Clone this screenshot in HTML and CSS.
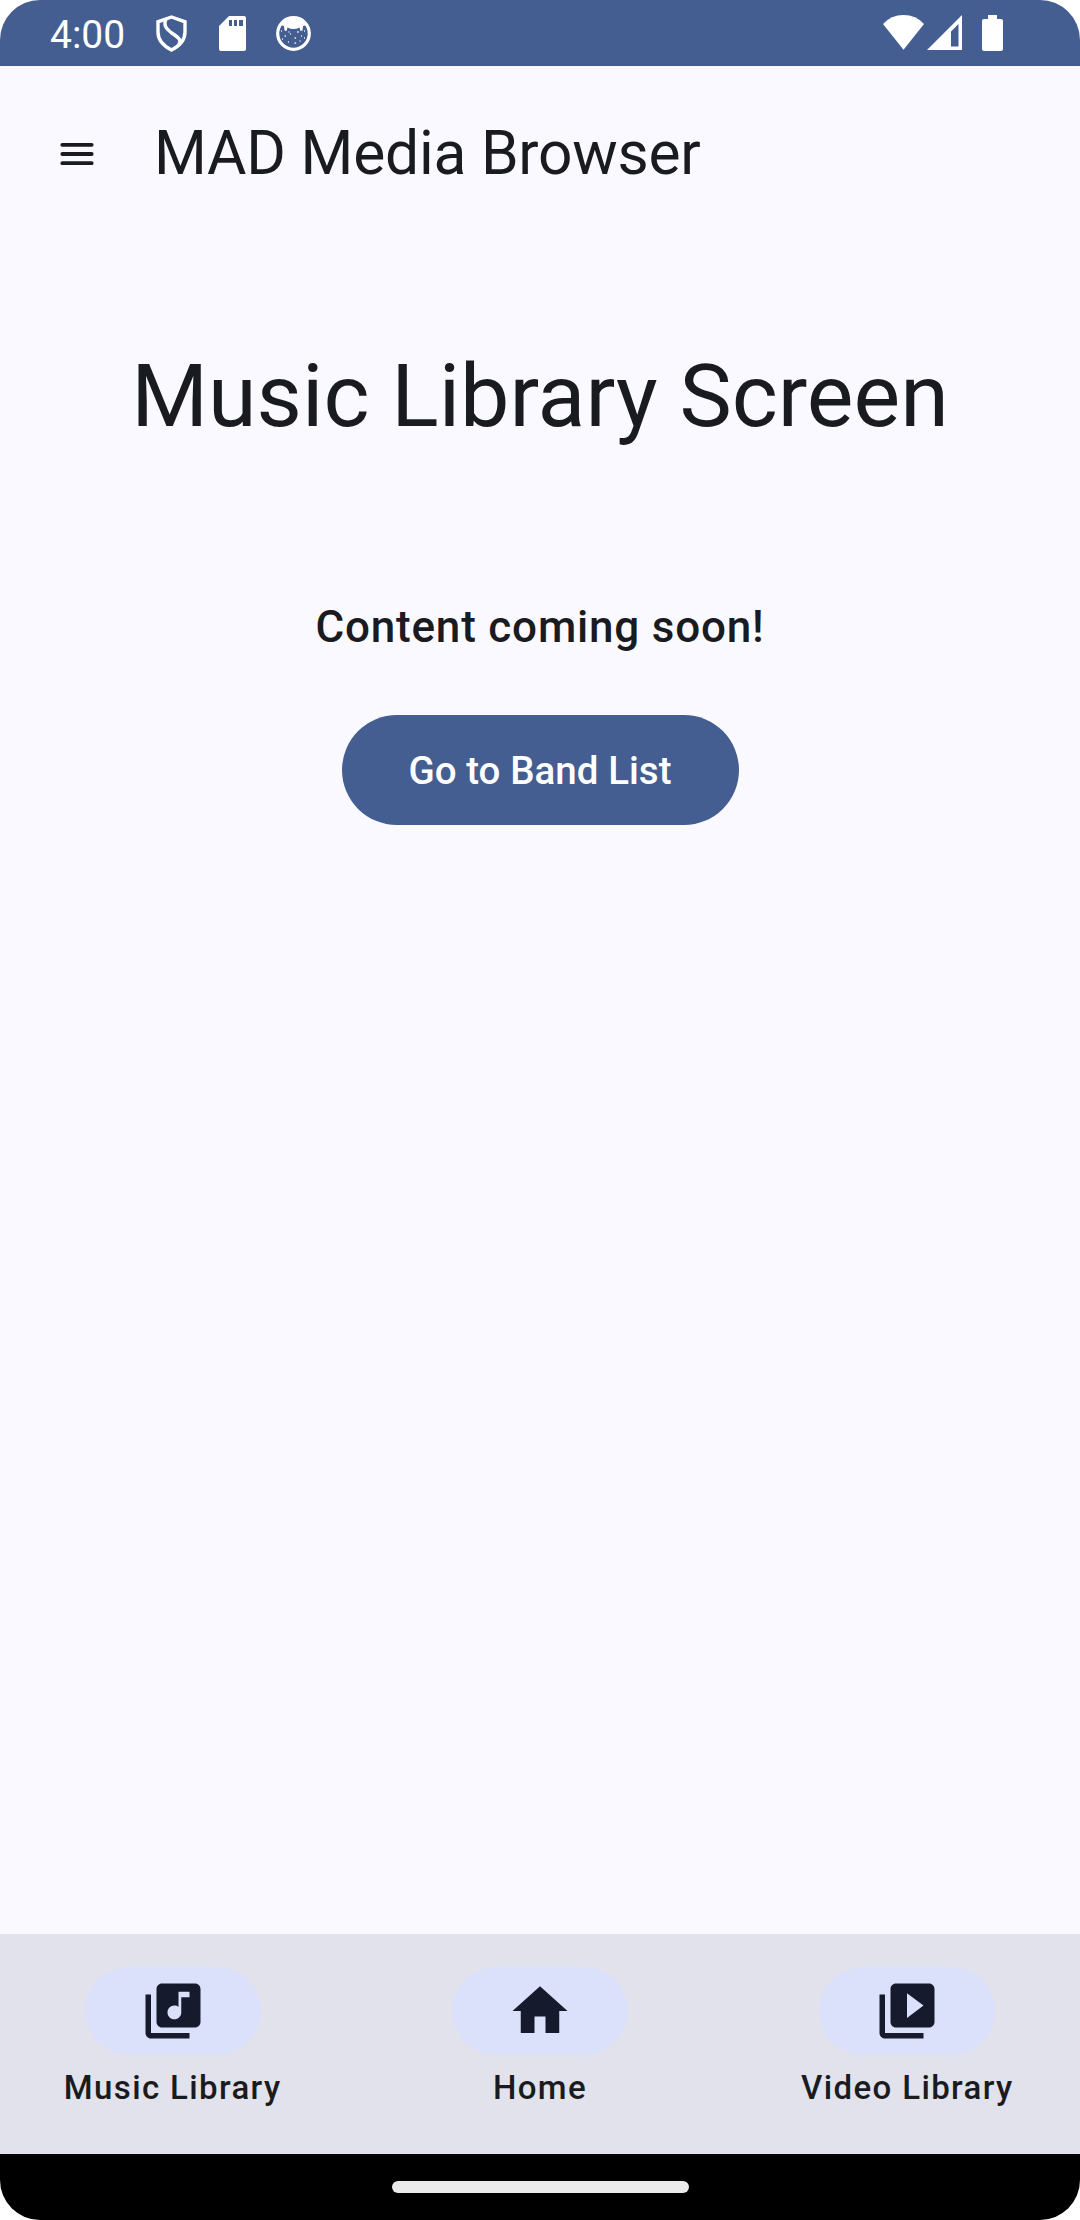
FILE: index.html
```html
<!DOCTYPE html>
<html lang="en">
<head>
<meta charset="utf-8">
<title>MAD Media Browser</title>
<link rel="stylesheet" href="styles.css">
</head>
<body>
<div class="screen">
  <header class="status-bar">
    <span class="clock">4:00</span>
    <svg class="status-left" width="156" height="40" viewBox="156 14 156 40" aria-hidden="true">
      <path d="M171.500 17 L185 21.800 V32 C185 41 179.500 46 171.500 50 C163.500 46 158 41 158 32 V21.800 Z" fill="none" stroke="#fff" stroke-width="3.400"/>
      <path d="M166 18.500 C163.500 25 165.500 28.500 171 32.500 C179.500 38 182 40 178 46" fill="none" stroke="#fff" stroke-width="3.400"/>
      <path fill="#fff" fill-rule="evenodd" d="M229 16 H244 Q246 16 246 18 V49 Q246 51 244 51 H221 Q219 51 219 49 V26 Z M229 20 V26 H232 V20 Z M234 20 V26 H237 V20 Z M239 20 V26 H243 V20 Z"/>
      <circle cx="293.500" cy="33.500" r="15.800" fill="none" stroke="#fff" stroke-width="3.200"/>
      <path fill="#fff" d="M280 25 Q285 17 293.500 17 Q302 17 307 25 L303 26 L302.500 30.500 L300.500 31 L299.500 27.500 Q293.500 30.500 287.500 27.500 L286.500 31 L284.500 30.500 L284 26 Z"/>
      <path d="M281 31h1M288.500 32h1M297 32h1.800M304 31h1M284.500 36h1.500M290 34h1M294.500 38h1.600M301 36h1M282 39h1M288 42h1M294.500 43h1.600M299.500 41h1M304 38h1" stroke="#fff" stroke-width="1.300" opacity=".85"/>
    </svg>
    <svg class="status-right" width="122" height="40" viewBox="882 14 122 40" aria-hidden="true">
      <path fill="#fff" d="M883 24 Q891 15 903.500 15 Q916 15 924 24 L903.500 49.700 Z"/>
      <path fill="#fff" fill-rule="evenodd" d="M962 15 V50 H927 Z M958.500 24 L951 31.500 V46.500 H958.500 Z"/>
      <path fill="#fff" d="M988 15 H997 V19 H1001 Q1003 19 1003 21 V49 Q1003 51 1001 51 H984 Q982 51 982 49 V21 Q982 19 984 19 H988 Z"/>
    </svg>
  </header>
  <div class="app-bar">
    <svg class="menu" width="34" height="24" viewBox="0 0 34 24" aria-label="Menu"><path d="M2.300 2.800H31.700M2.300 12H31.700M2.300 21.200H31.700" stroke="#1a1b20" stroke-width="3.800" stroke-linecap="round"/></svg>
    <h1 class="title">MAD Media Browser</h1>
  </div>
  <main class="content">
    <h2 class="headline">Music Library Screen</h2>
    <p class="message">Content coming soon!</p>
    <button class="action">Go to Band List</button>
  </main>
  <nav class="nav">
    <div class="nav-item">
      <span class="pill"><svg class="icon" viewBox="0 0 24 24"><path d="M20 2H8c-1.100 0-2 .9-2 2v12c0 1.100.9 2 2 2h12c1.100 0 2-.9 2-2V4c0-1.100-.9-2-2-2zm-2 5h-3v5.500c0 1.380-1.120 2.500-2.500 2.500S10 13.880 10 12.500s1.120-2.500 2.500-2.500c.57 0 1.080.19 1.500.51V5h4v2zM4 6H2v14c0 1.100.9 2 2 2h14v-2H4V6z"/></svg></span>
      <span class="label">Music Library</span>
    </div>
    <div class="nav-item">
      <span class="pill"><svg class="icon" viewBox="0 0 24 24"><path d="M10 20v-6h4v6h5v-8h3L12 3 2 12h3v8z"/></svg></span>
      <span class="label">Home</span>
    </div>
    <div class="nav-item">
      <span class="pill"><svg class="icon" viewBox="0 0 24 24"><path d="M4 6H2v14c0 1.100.9 2 2 2h14v-2H4V6zm16-4H8c-1.100 0-2 .9-2 2v12c0 1.100.9 2 2 2h12c1.100 0 2-.9 2-2V4c0-1.100-.9-2-2-2zm-8 12.500v-9l6 4.500-6 4.500z"/></svg></span>
      <span class="label">Video Library</span>
    </div>
  </nav>
  <footer class="gesture-bar"><span class="handle"></span></footer>
</div>
</body>
</html>
```
FILE: styles.css
```css
* { box-sizing: border-box; }
body { margin: 0; background: #fff; font-family: Roboto, sans-serif; color: #1a1b20; }
.screen { width: 1080px; height: 2220px; display: flex; flex-direction: column; overflow: hidden; border-radius: 40px; background: #faf9ff; }
.status-bar { height: 66px; display: flex; align-items: flex-start; padding: 14px 76px 0 50px; background: #455e91; color: #fff; }
.clock { width: 106px; font-size: 39px; line-height: 42px; }
.status-right { margin-left: auto; }
.app-bar { height: 176px; display: flex; align-items: center; padding-left: 60px; }
.title { margin: 0 0 2px 60px; font-size: 60.5px; line-height: 77px; font-weight: 400; letter-spacing: -0.23px; white-space: nowrap; }
.content { flex: 1; display: flex; flex-direction: column; align-items: center; padding-top: 99px; }
.headline { margin: 0; font-size: 88px; line-height: 110px; font-weight: 400; white-space: nowrap; }
.message { margin: 143px 0 0; font-size: 44px; line-height: 66px; font-weight: 500; letter-spacing: 0.8px; }
.action { width: 397px; height: 110px; margin: 55px 0 0; padding: 0; border: 0; border-radius: 55px; background: #455e91; color: #fff; font: 500 38.5px/55px Roboto, sans-serif; letter-spacing: 0.05px; }
.nav { height: 220px; display: grid; grid-template-columns: repeat(3, 1fr); gap: 22px; padding-top: 33px; background: #e2e2ec; }
.nav-item { display: flex; flex-direction: column; align-items: center; }
.pill { width: 176px; height: 88px; display: flex; align-items: center; justify-content: center; border-radius: 44px; background: #dce1fb; }
.icon { width: 66px; height: 66px; fill: #151b2c; }
.label { margin-top: 11px; font-size: 33px; line-height: 44px; font-weight: 500; letter-spacing: 1.375px; }
.gesture-bar { height: 66px; display: flex; align-items: center; justify-content: center; background: #000; }
.handle { width: 297px; height: 12px; border-radius: 6px; background: #ebebeb; }
```
